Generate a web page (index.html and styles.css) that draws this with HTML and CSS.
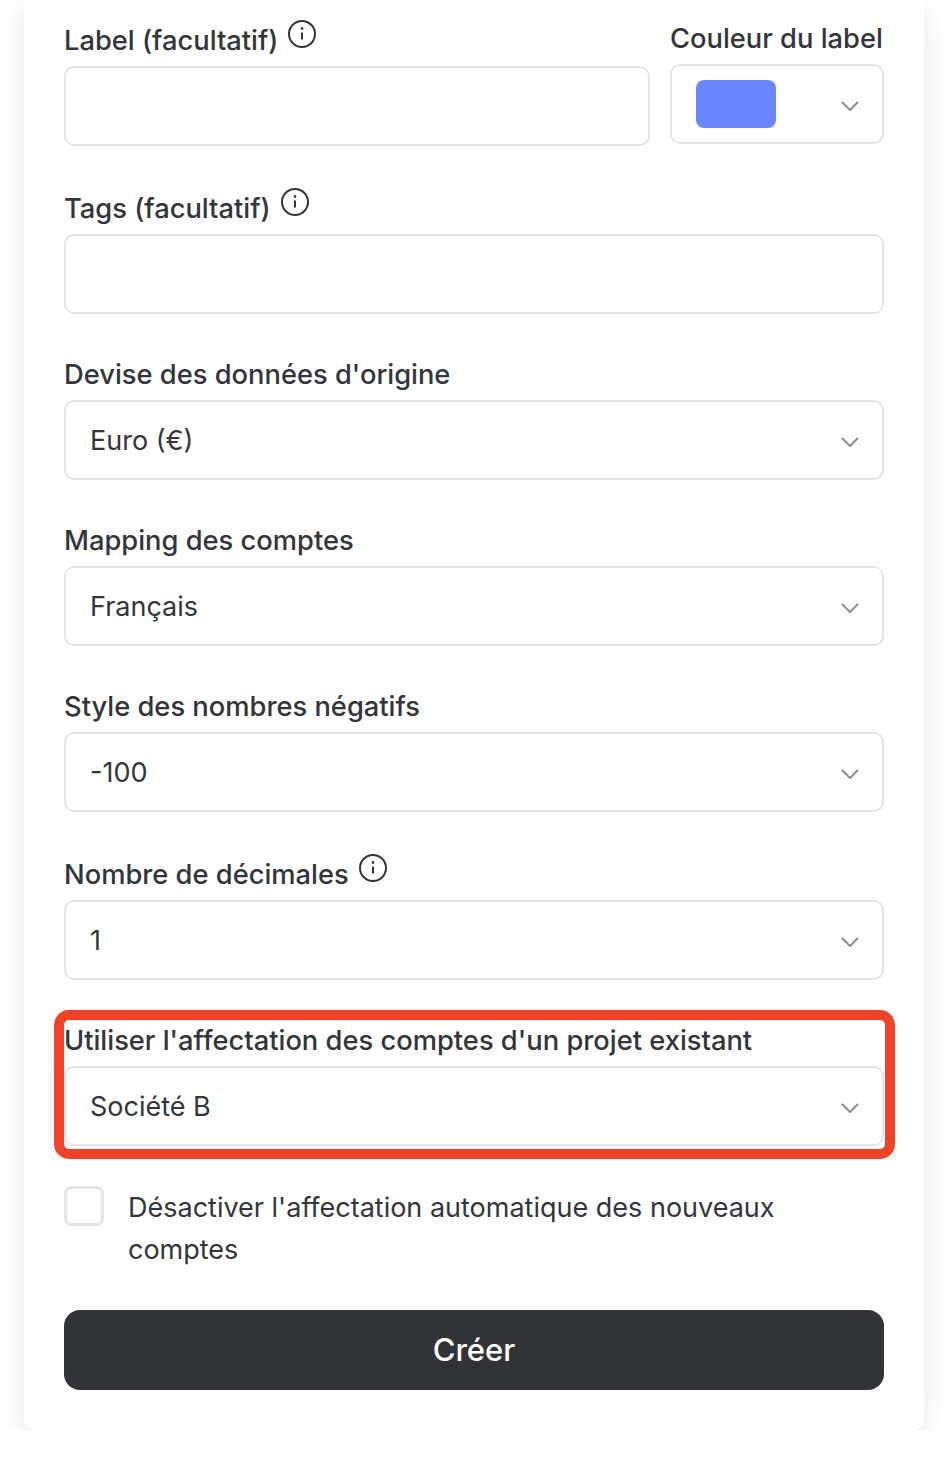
FILE: index.html
```html
<!DOCTYPE html>
<html lang="fr">
<head>
    <meta charset="UTF-8">
    <meta name="viewport" content="width=device-width, initial-scale=1.0">
    <title>Créer un projet</title>
    <link rel="stylesheet" href="styles.css">
</head>
<body>
    <form class="card">
        <div class="field-row">
            <div class="field">
                <div class="label-row">
                    <label>Label (facultatif)</label>
                    <svg class="info" viewBox="0 0 28 28"><circle cx="14" cy="14" r="13"/><path d="M14 12.5v7"/><path class="dot" d="M14 8.2v.6"/></svg>
                </div>
                <input class="input" type="text">
            </div>
            <div class="field">
                <label>Couleur du label</label>
                <div class="input select">
                    <span class="swatch"></span>
                    <svg class="chevron" viewBox="0 0 18 10"><path d="M1 1l8 8 8-8"/></svg>
                </div>
            </div>
        </div>

        <div class="field">
            <div class="label-row">
                <label>Tags (facultatif)</label>
                <svg class="info" viewBox="0 0 28 28"><circle cx="14" cy="14" r="13"/><path d="M14 12.5v7"/><path class="dot" d="M14 8.2v.6"/></svg>
            </div>
            <input class="input" type="text">
        </div>

        <div class="field">
            <label>Devise des données d'origine</label>
            <div class="input select">
                <span>Euro (€)</span>
                <svg class="chevron" viewBox="0 0 18 10"><path d="M1 1l8 8 8-8"/></svg>
            </div>
        </div>

        <div class="field">
            <label>Mapping des comptes</label>
            <div class="input select">
                <span>Français</span>
                <svg class="chevron" viewBox="0 0 18 10"><path d="M1 1l8 8 8-8"/></svg>
            </div>
        </div>

        <div class="field">
            <label>Style des nombres négatifs</label>
            <div class="input select">
                <span>-100</span>
                <svg class="chevron" viewBox="0 0 18 10"><path d="M1 1l8 8 8-8"/></svg>
            </div>
        </div>

        <div class="field">
            <div class="label-row">
                <label>Nombre de décimales</label>
                <svg class="info" viewBox="0 0 28 28"><circle cx="14" cy="14" r="13"/><path d="M14 12.5v7"/><path class="dot" d="M14 8.2v.6"/></svg>
            </div>
            <div class="input select">
                <span>1</span>
                <svg class="chevron" viewBox="0 0 18 10"><path d="M1 1l8 8 8-8"/></svg>
            </div>
        </div>

        <div class="field highlighted">
            <label>Utiliser l'affectation des comptes d'un projet existant</label>
            <div class="input select">
                <span>Société B</span>
                <svg class="chevron" viewBox="0 0 18 10"><path d="M1 1l8 8 8-8"/></svg>
            </div>
        </div>

        <div class="check-row">
            <input class="checkbox" type="checkbox">
            <span class="check-text">Désactiver l'affectation automatique des nouveaux comptes</span>
        </div>

        <button class="btn" type="button">Créer</button>
    </form>
</body>
</html>
```

FILE: styles.css
```css
* {
    margin: 0;
    padding: 0;
    box-sizing: border-box;
}
body {
    font-family: 'Inter', 'Liberation Sans', sans-serif;
    background: #fff;
    color: #33353a;
    font-size: 27px;
}
.card {
    margin: 0 24px;
    height: 1430px;
    padding: 20px 40px 40px;
    background: #fff;
    border-radius: 0 0 10px 10px;
    box-shadow: 0 10px 20px rgba(0, 0, 0, 0.05), 0 6px 40px rgba(0, 0, 0, 0.05);
    display: flex;
    flex-direction: column;
    gap: 42px;
}
.field-row {
    display: grid;
    grid-template-columns: 1fr 214px;
    gap: 20px;
}
.field {
    display: flex;
    flex-direction: column;
}
.field label {
    display: block;
    font-size: 27.3px;
    font-weight: 450;
    line-height: 36px;
    padding-top: 1px;
    margin-bottom: 7px;
    white-space: nowrap;
}
.label-row {
    display: flex;
    gap: 10px;
    height: 46px;
}
.label-row label {
    margin-top: 2px;
}
.info {
    width: 28px;
    height: 28px;
    fill: none;
    stroke: #33353a;
    stroke-width: 2;
}
.info .dot {
    stroke-linecap: round;
    stroke-width: 2.4;
}
.input {
    width: 100%;
    height: 80px;
    border: 2px solid #e4e4ea;
    border-radius: 10px;
    background: #fff;
    font: inherit;
    color: inherit;
}
.select {
    display: flex;
    align-items: center;
    justify-content: space-between;
    padding: 0 24px;
}
.swatch {
    width: 80px;
    height: 48px;
    border-radius: 8px;
    background: #6b87ff;
}
.chevron {
    width: 18px;
    height: 10px;
    margin: 4px -1px 0 0;
    fill: none;
    stroke: #8e8f94;
    stroke-width: 2;
}
.highlighted {
    position: relative;
}
.highlighted::after {
    content: "";
    position: absolute;
    top: -12px;
    left: -10px;
    right: -11px;
    bottom: -13px;
    border: 10px solid #ee4327;
    border-radius: 15px;
    pointer-events: none;
}
.check-row {
    display: flex;
    gap: 24px;
    height: 84px;
    line-height: 42px;
    margin-top: -2px;
}
.check-text {
    padding-top: 1px;
}
.checkbox {
    appearance: none;
    flex: none;
    width: 40px;
    height: 40px;
    border: 3px solid #e4e4ea;
    border-radius: 8px;
    background: #fff;
}
.btn {
    height: 80px;
    margin-top: -2px;
    padding-bottom: 2px;
    border: none;
    border-radius: 16px;
    background: #323337;
    color: #fff;
    font: inherit;
    font-size: 31px;
    font-weight: 500;
    cursor: pointer;
}
```
